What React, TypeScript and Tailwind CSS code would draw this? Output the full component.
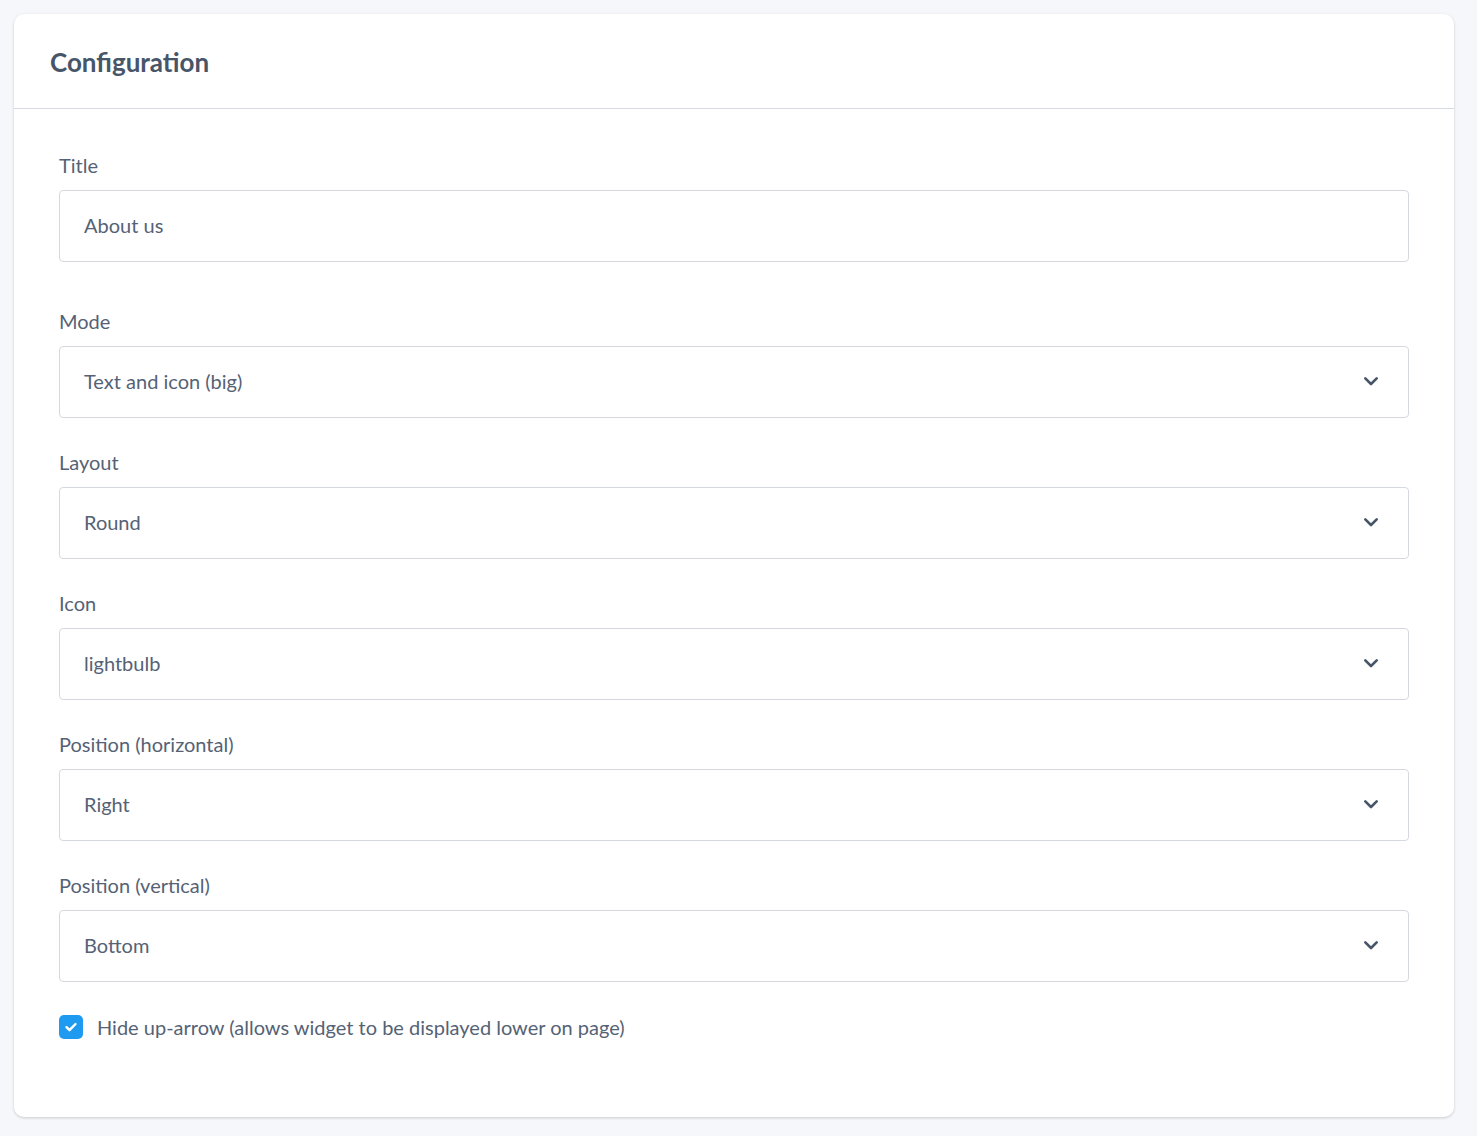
import { useState } from 'react';

interface SelectField {
  label: string;
  value: string;
}

const selects: SelectField[] = [
  { label: 'Mode', value: 'Text and icon (big)' },
  { label: 'Layout', value: 'Round' },
  { label: 'Icon', value: 'lightbulb' },
  { label: 'Position (horizontal)', value: 'Right' },
  { label: 'Position (vertical)', value: 'Bottom' },
];

function Chevron() {
  return (
    <svg width="16" height="16" viewBox="0 0 16 16" fill="none" className="text-[#475569]">
      <path d="M2.3 5.3L8 11l5.7-5.7" stroke="currentColor" strokeWidth="2.6" strokeLinecap="round" strokeLinejoin="round" />
    </svg>
  );
}

export default function App() {
  const [title, setTitle] = useState('About us');
  const [hideArrow, setHideArrow] = useState(true);

  return (
    <div className="min-h-[1136px] bg-[#f5f7fa] pt-[14px] pr-[23px] pb-[19px] pl-[14px] font-['Lato',sans-serif] text-[#556275]">
      <div className="rounded-[10px] bg-white shadow-[0_1px_3px_rgba(0,0,0,0.18)]">
        <div className="flex h-[95px] items-center border-b border-[#d7dbe0] px-9 pt-[2px]">
          <h2 className="text-[26px] font-bold text-[#475569]">Configuration</h2>
        </div>

        <div className="px-[45px] pt-[44px] pb-[78px]">
          <div className="mb-[47px]">
            <label className="mb-[13px] block text-[20px] leading-6">Title</label>
            <input
              value={title}
              onChange={(e) => setTitle(e.target.value)}
              className="h-[72px] w-full rounded-[4px] border border-[#d5d9df] px-6 pb-[2px] text-[20px] text-[#556275] outline-none"
            />
          </div>

          <div className="flex flex-col gap-8">
            {selects.map((f) => (
              <div key={f.label}>
                <label className="mb-[13px] block text-[20px] leading-6">{f.label}</label>
                <div className="flex h-[72px] w-full items-center justify-between rounded-[4px] border border-[#d5d9df] pr-[29px] pb-[2px] pl-6">
                  <span className="text-[20px]">{f.value}</span>
                  <Chevron />
                </div>
              </div>
            ))}
          </div>

          <label className="mt-[33px] flex cursor-pointer items-center gap-[14px]">
            <span
              onClick={() => setHideArrow(!hideArrow)}
              className={`flex h-6 w-6 items-center justify-center rounded-[5px] ${
                hideArrow ? 'bg-[#1e9bf0]' : 'border border-[#d5d9df] bg-white'
              }`}
            >
              {hideArrow && (
                <svg width="16" height="16" viewBox="0 0 16 16" fill="none">
                  <path d="M3.5 8.2l3 3L12.5 5" stroke="white" strokeWidth="2.4" strokeLinecap="round" strokeLinejoin="round" />
                </svg>
              )}
            </span>
            <span className="text-[20px] leading-6">Hide up-arrow (allows widget to be displayed lower on page)</span>
          </label>
        </div>
      </div>
    </div>
  );
}
